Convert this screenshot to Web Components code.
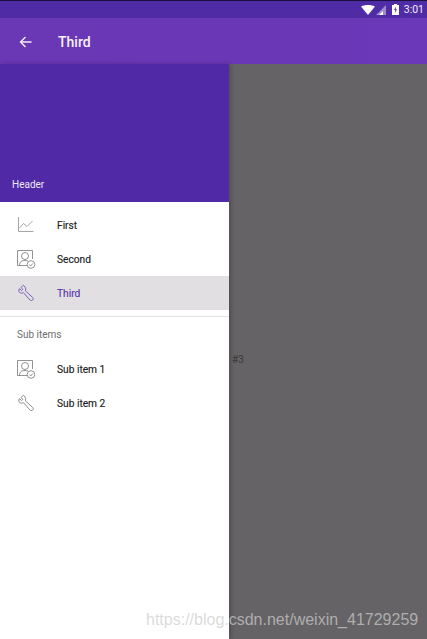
<!DOCTYPE html>
<html><head><meta charset="utf-8">
<style>
html,body{margin:0;padding:0;width:427px;height:639px;overflow:hidden;font-family:Roboto,"Liberation Sans",sans-serif}
</style></head><body>
<template id="t-status"><style>
:host{display:flex;height:18px;box-sizing:border-box;border-top:1px solid #1c0f3e;background:#4f2ba6;align-items:center;justify-content:flex-end;padding-right:3px;color:#fff;font:400 10.5px Roboto,sans-serif}
svg{display:block}
span{margin-left:5px;color:#f1edf8}
</style>
<svg width="14" height="10" viewBox="0 0 14 10" style="margin-right:1px"><path d="M0 1.500C4-.5 10-.5 14 1.500L7 10Z" fill="#fff"/></svg>
<svg width="10" height="10" viewBox="0 0 10 10"><path d="M0 10L10 0V10Z" fill="#fff" opacity=".45"/><path d="M3 10L7 6V10Z" fill="#fff"/></svg>
<svg width="7" height="11" viewBox="0 0 7 11" style="margin-left:6px"><path d="M2 0H5V1H7V11H0V1H2Z" fill="#fff"/><path d="M4 2.500L2 6H3.300L3 9L5 5.200H3.700Z" fill="#4f2ba6"/></svg>
<span><slot></slot></span>
</template>

<template id="t-appbar"><style>
:host{display:flex;height:46px;box-sizing:border-box;background:linear-gradient(90deg,#6a37b5,#6a38b8);align-items:center;color:#f6f1fb;padding:1px 0 0 19px;font:500 14px Roboto,sans-serif}
svg{display:block;margin-right:26px}
</style>
<svg width="13" height="12" viewBox="0 0 13 12"><path d="M12.500 6H1.500M6.500 1L1.500 6L6.500 11" fill="none" stroke="#f6eefb" stroke-width="1.400"/></svg>
<slot></slot>
</template>

<template id="t-drawer"><style>
:host{display:flex;flex-direction:column;width:229px;background:#fff;flex:none;position:relative;z-index:1;box-shadow:2px 0 4px rgba(0,0,0,.22)}
</style><slot></slot></template>

<template id="t-header"><style>
:host{display:flex;height:138px;box-sizing:border-box;background:#5029a7;align-items:flex-end;padding:0 0 12px 12px;color:#ece8f5;font:400 10px Roboto,sans-serif}
</style><slot></slot></template>

<template id="t-item"><style>
:host{display:flex;height:34px;align-items:center;padding-left:17px;color:#1c1c1c;font:400 10.2px Roboto,sans-serif;-webkit-text-stroke:.15px currentColor}
:host([active]){background:#e1dfe2;color:#5b35ad}
.i{width:18px;height:18px;margin-right:22px;display:flex}
</style><span class="i"><slot name="icon"></slot></span><slot></slot></template>

<template id="t-section"><style>
:host{display:flex;flex-direction:column;color:#6d6d6d;font:400 10px Roboto,sans-serif}
.d{height:1px;background:#e2e2e2;margin-top:6px}
.t{height:35px;padding-left:17px;display:flex;align-items:center}
</style><div class="d"></div><div class="t"><slot></slot></div></template>

<template id="t-chart"><style>:host{display:block;width:18px;height:18px}svg{display:block}</style>
<svg width="18" height="18" viewBox="0 0 18 18" fill="none" stroke="#8f8f8f" stroke-width=".8"><path d="M1.500 1V15.500H16.500"/><path d="M2.500 12L6.500 7.500L10 10.500L15.500 5"/></svg></template>

<template id="t-person"><style>:host{display:block;width:18px;height:18px}svg{display:block;overflow:visible}</style>
<svg width="18" height="18" viewBox="0 0 18 18" fill="none" stroke="#777" stroke-width=".8"><path d="M10 15.500H.500V.500H15.500V9"/><circle cx="8" cy="6" r="3.500"/><path d="M2.500 15.500C2.500 11.500 5 10.500 8 10.500C9 10.500 10 10.700 11 11"/><circle cx="14" cy="14.500" r="3.800" fill="#fff"/><path d="M12.300 14.500L13.700 16L15.800 13.500"/></svg></template>

<template id="t-wrench"><style>:host{display:block;width:18px;height:18px}svg{display:block}</style>
<svg width="18" height="18" viewBox="0 0 18 18" fill="none" stroke="currentColor" stroke-width="1" stroke-linejoin="round"><path d="M6.300 1.200L4 3.500L5.900 5.300L4.500 6.700L2.500 4.600C1.200 6.400 1.800 8.300 3.300 8.900C4.400 9.300 5.400 9.100 6.300 8.500L12.800 15.800C13.700 16.800 14.900 16.800 15.700 16C16.500 15.100 16.400 14.100 15.600 13.400L8.400 6.900C8.900 5.700 8.800 4.400 8.100 3.200C7.700 2.300 7.100 1.600 6.300 1.200Z"/></svg></template>

<template id="t-scrim"><style>
:host{display:flex;flex:1;background:#656365;align-items:center;color:#3a393a;font:400 10px Roboto,sans-serif;padding:16px 0 0 3px;box-sizing:border-box}
</style><slot></slot></template>

<template id="t-app"><style>
:host{display:flex;flex-direction:column;width:427px;height:639px;position:relative;overflow:hidden}
.main{flex:1;display:flex;min-height:0}
.wm{position:absolute;z-index:2;left:146px;top:611px;font:400 16px "Liberation Sans",sans-serif;color:rgba(205,205,205,.72);white-space:nowrap}
</style>
<slot name="top"></slot><div class="main"><slot></slot></div>
<div class="wm"><slot name="wm"></slot></div></template>

<x-app>
<x-status slot="top">3:01</x-status>
<x-appbar slot="top">Third</x-appbar>
<x-drawer>
<x-header>Header</x-header>
<div style="height:6px"></div>
<x-item><x-chart slot="icon"></x-chart>First</x-item>
<x-item><x-person slot="icon"></x-person>Second</x-item>
<x-item active><x-wrench slot="icon" style="color:#7a62b8"></x-wrench>Third</x-item>
<x-section>Sub items</x-section>
<x-item><x-person slot="icon"></x-person>Sub item 1</x-item>
<x-item><x-wrench slot="icon" style="color:#8b8b8b"></x-wrench>Sub item 2</x-item>
</x-drawer>
<x-scrim>#3</x-scrim>
<span slot="wm">https://blog.csdn.net/weixin_41729259</span>
</x-app>
<script>
const map={'x-status':'t-status','x-appbar':'t-appbar','x-drawer':'t-drawer','x-header':'t-header','x-item':'t-item','x-section':'t-section','x-chart':'t-chart','x-person':'t-person','x-wrench':'t-wrench','x-scrim':'t-scrim','x-app':'t-app'};
for(const [n,id] of Object.entries(map)){
 customElements.define(n,class extends HTMLElement{constructor(){super();this.attachShadow({mode:'open'}).appendChild(document.getElementById(id).content.cloneNode(true));}});
}
</script>
</body></html>
